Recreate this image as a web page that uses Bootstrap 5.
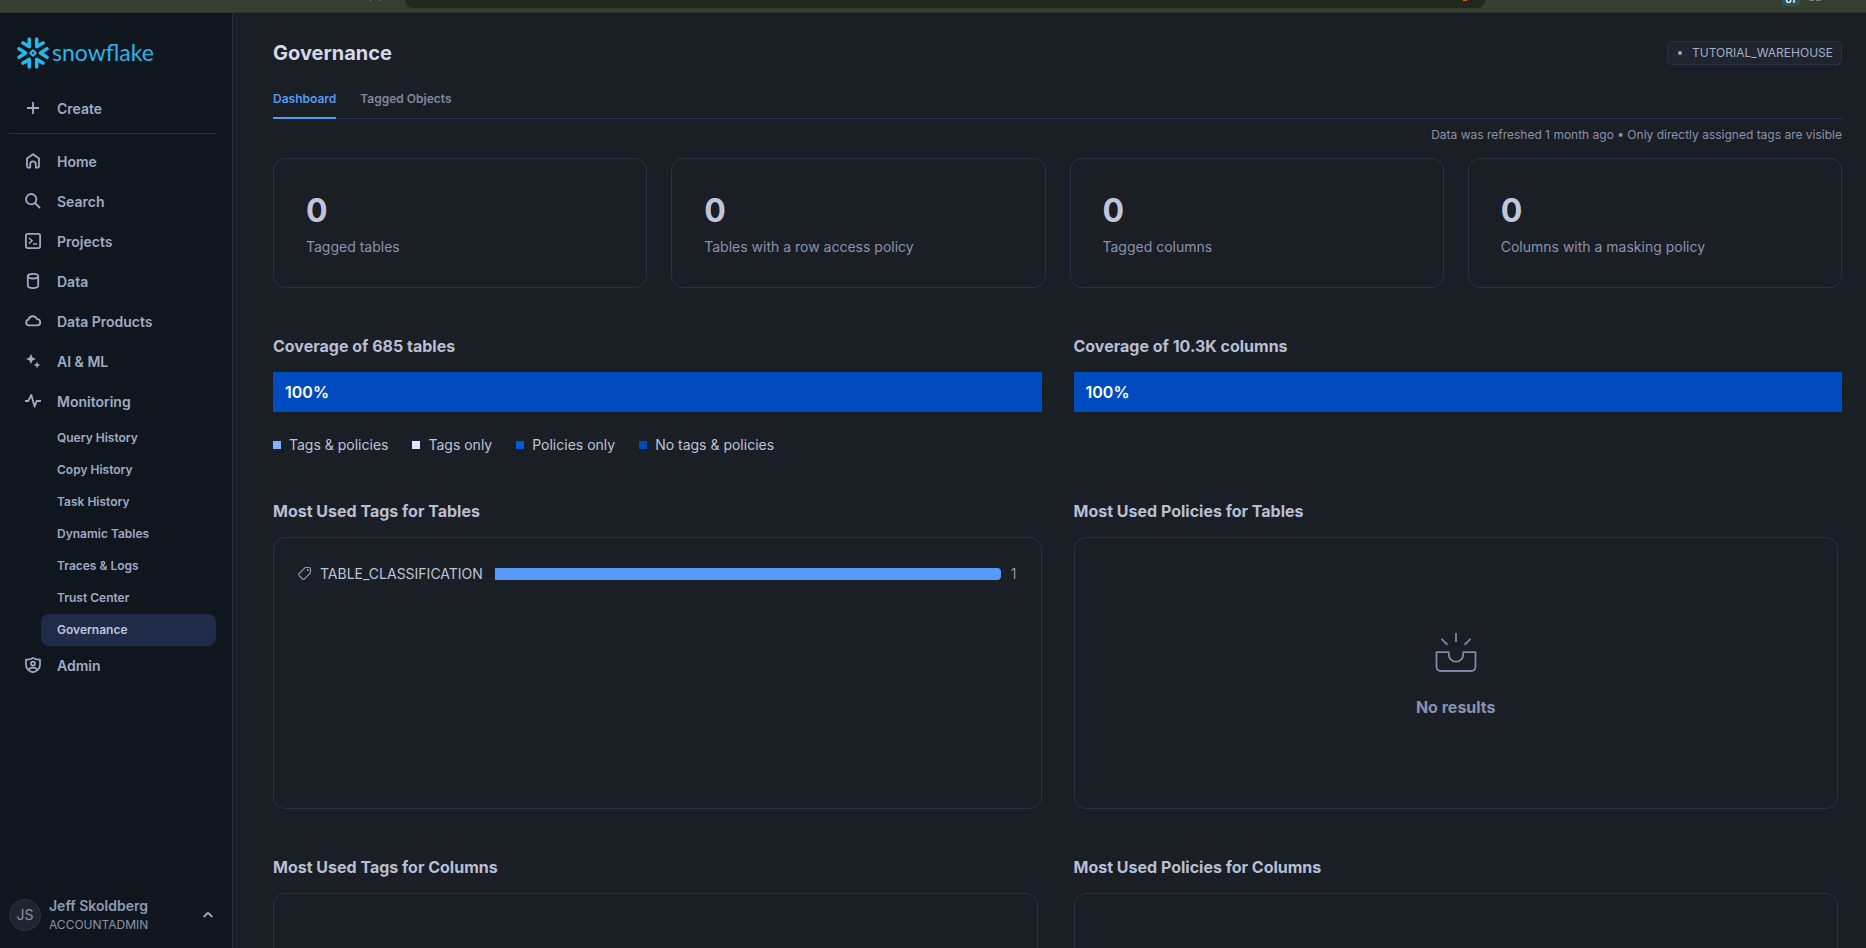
<!DOCTYPE html>
<html lang="en">
<head>
<meta charset="utf-8">
<meta name="viewport" content="width=device-width, initial-scale=1">
<title>Governance</title>
<link href="https://cdn.jsdelivr.net/npm/bootstrap@5.3.0/dist/css/bootstrap.min.css" rel="stylesheet">
<style>
  :root { --line: #2b3144; --muted: #8a93ab; --text: #bdc4d9; --nav: #9fabc4; }
  body { font-family: Inter, "Liberation Sans", sans-serif; font-size: 14px; line-height: 20px; background: #1a1e25; color: var(--text); }
  .page-shell { height: 100vh; overflow: hidden; }
  .browser-strip { height: 13px; background: #353f2f; border-bottom: 1px solid #2e3432; display: grid; grid-template-columns: 405fr 1080fr 381fr; overflow: hidden; }
  .address-pill { height: 8px; background: #1f281a; border-radius: 0 0 8px 8px; }
  .address-mark { width: 4px; height: 1px; background: #e8500c; margin-right: 18px; }
  .strip-dots { margin-right: 17px; }
  .strip-dots i, .strip-tools i { width: 1px; height: 1px; background: #78806f; }
  .strip-dots i { margin-right: 8px; }
  .strip-tools { padding-right: 45px; }
  .strip-tools i { width: 5px; margin-left: 2px; }
  .strip-badge { width: 18px; height: 6px; border-radius: 0 0 4px 4px; background: #2a5364; color: #fff; font-size: 8px; font-weight: 700; line-height: 0; margin-right: 7px; text-align: center; overflow: hidden; }

  .side { width: 233px; background: #10161d; border-right: 1px solid #2b2f45; padding: 24px 16px 14px 9px; }
  .brand { color: #29b5e8; font-family: Lato, sans-serif; font-size: 23px; line-height: 32px; padding-left: 8px; gap: 3px; margin-bottom: 20px; }
  .brand:hover { color: #29b5e8; }
  .brand span { margin-bottom: 2px; line-height: 30px; }
  .side .nav-link { color: var(--nav); font-weight: 600; padding: 0 0 0 16px; height: 40px; gap: 16px; display: flex; align-items: center; }
  .side .nav-link svg { margin-bottom: 2px; }
  .side .create-link { margin-bottom: 4px; }
  .side-rule { border-top: 1px solid #2a303e; margin-bottom: 8px; }
  .side .sub-nav .nav-link { font-size: 12px; height: 32px; margin-left: 32px; border-radius: 8px; }
  .side .sub-nav .nav-link.active { background: #1f2b49; color: #bdc4d9; }
  .account { color: var(--nav); background: none; border: 0; padding: 0 3px 0 0; text-align: left; }
  .avatar { width: 32px; height: 32px; border-radius: 50%; background: #1e252f; border: 1px solid #2b3144; color: var(--muted); }
  .account-name { font-weight: 600; line-height: 20px; color: #8f9ab3; }
  .account-role { font-size: 12px; line-height: 18px; color: var(--muted); }

  .content { padding: 24px 24px 0 40px; min-width: 0; }
  .page-title { font-size: 20px; line-height: 32px; font-weight: 700; color: #d5d9e6; }
  .warehouse { font-size: 12px; line-height: 16px; padding: 3px 8px 3px 10px; background: #1e252f; border: 1px solid var(--line); border-radius: 5px; color: #a3adc4; }
  .warehouse::before { content: ""; width: 4px; height: 4px; border-radius: 50%; background: var(--nav); margin-right: 10px; }
  .tab-row { margin-top: 12px; border-bottom: 1px solid #2b3350; gap: 24px; }
  .tab-row .nav-link { padding: 9px 0; font-size: 12px; line-height: 18px; font-weight: 600; color: #7f889f; border-bottom: 2px solid transparent; margin-bottom: -1px; border-radius: 0; }
  .tab-row .nav-link.active { color: #5999f8; border-color: #5999f8; }
  .refresh-note { font-size: 12px; line-height: 16px; color: var(--muted); padding: 8px 0 15px; }
  .outline { border: 1px solid var(--line); border-radius: 12px; }
  .stat { padding: 32px; height: 130px; }
  .stat-value { font-size: 32px; line-height: 40px; font-weight: 700; color: #bfc5da; }
  .stat-label { color: var(--muted); line-height: 20px; margin-top: 6px; }
  .pair { --bs-gutter-x: 32px; }
  .section-title { font-size: 16px; line-height: 24px; font-weight: 700; margin: 0 0 14px; color: #b8bfd4; }
  .coverage { margin-top: 46px; }
  .coverage .progress { height: 40px; border-radius: 0; background: #2b3144; }
  .coverage .progress-bar { background: #004bbd; color: #fff; font-size: 16px; font-weight: 600; text-align: left; padding-left: 12px; }
  .legend { gap: 24px; margin-top: 23px; }
  .legend li::before { content: ""; width: 8px; height: 8px; margin-right: 8px; background: var(--key); }
  .k-both { --key: #82b4fc; } .k-tags { --key: #d6e6ff; } .k-pol { --key: #0757d8; } .k-none { --key: #0049bb; }
  .usage { margin-top: 44px; }
  .usage + .usage { margin-top: 46px; }
  .usage .outline { height: 272px; }
  .inset-end { margin-right: 4px; }
  .tag-list { padding: 26px 24px 26px 23px; }
  .tag-bar { height: 12px; background: #5999f8; border-radius: 0 4px 4px 0; margin: 0 10px 0 12px; }
  .tag-count { color: var(--muted); }
  .empty { color: #8992ad; font-size: 16px; line-height: 24px; font-weight: 700; padding-top: 4px; }
  .empty svg { margin-bottom: 22px; }
</style>
</head>
<body>
<div class="page-shell d-flex flex-column">
  <div class="browser-strip flex-shrink-0">
    <div class="strip-dots d-flex justify-content-end"><i></i><i></i></div>
    <div class="address-pill d-flex justify-content-end"><span class="address-mark"></span></div>
    <div class="strip-tools d-flex justify-content-end"><span class="strip-badge">OT</span><i></i><i></i></div>
  </div>
  <div class="d-flex flex-grow-1 overflow-hidden">
    <aside class="side d-flex flex-column flex-shrink-0">
      <a class="brand d-flex align-items-center text-decoration-none" href="#">
        <svg width="32" height="32" viewBox="0 0 32 32" fill="none" stroke="#29b5e8" stroke-width="3.6" stroke-linecap="round" stroke-linejoin="round" aria-hidden="true">
          <path d="M12.3 2v7.6L6 6M19.7 2v7.6L26 6M12.3 30v-7.6L6 26M19.7 30v-7.6L26 26M2 11.8L8.6 16 2 20.2M30 11.8L23.4 16 30 20.2"/>
          <path stroke-width="2" d="M16 13.2l2.800 2.800-2.800 2.800-2.800-2.800z"/>
        </svg>
        <span>snowflake</span>
      </a>
      <a class="nav-link create-link" href="#"><svg width="16" height="16" viewBox="0 0 16 16" fill="none" stroke="currentColor" stroke-width="1.8" aria-hidden="true"><path d="M8 2v12M2 8h12"/></svg>Create</a>
      <div class="side-rule"></div>
      <nav class="nav flex-column">
        <a class="nav-link" href="#"><svg width="16" height="16" viewBox="0 0 16 16" fill="none" stroke="currentColor" stroke-width="1.8" stroke-linejoin="round" aria-hidden="true"><path d="M2 5.600L8 1.200l6 4.400V13q0 1.600-1.300 1.600h-1.900v-3.400a2.800 2.800 0 0 0-5.600 0v3.400H3.300Q2 14.600 2 13z"/></svg>Home</a>
        <a class="nav-link" href="#"><svg width="16" height="16" viewBox="0 0 16 16" fill="none" stroke="currentColor" stroke-width="1.8" aria-hidden="true"><circle cx="6.2" cy="6.2" r="5.200"/><path d="M10 10l5 5"/></svg>Search</a>
        <a class="nav-link" href="#"><svg width="16" height="16" viewBox="0 0 16 16" fill="none" stroke="currentColor" stroke-width="1.8" aria-hidden="true"><rect x=".9" y=".9" width="14.2" height="14.2" rx="1.8"/><path stroke-width="1.5" d="M4 5l3 2.800L4 10.600M8 10.900h4"/></svg>Projects</a>
        <a class="nav-link" href="#"><svg width="16" height="16" viewBox="0 0 16 16" fill="none" stroke="currentColor" stroke-width="1.8" aria-hidden="true"><path d="M2.800 3.200v9.400q0 2.500 5.200 2.500t5.200-2.500V3.200"/><ellipse cx="8" cy="3.2" rx="5.2" ry="2.3"/></svg>Data</a>
        <a class="nav-link" href="#"><svg width="16" height="16" viewBox="0 0 16 16" fill="none" stroke="currentColor" stroke-width="1.8" stroke-linejoin="round" aria-hidden="true"><path d="M3.800 12.400a2.900 2.900 0 0 1-.4-5.700A4.500 4.500 0 0 1 12 6.200a3.100 3.100 0 0 1 .2 6.200z"/></svg>Data Products</a>
        <a class="nav-link" href="#"><svg width="16" height="16" viewBox="0 0 16 16" fill="currentColor" aria-hidden="true"><path d="M6 1l1.600 3.400L11 6 7.600 7.600 6 11 4.400 7.600 1 6l3.400-1.600zM12 8.600l1 2.400 2.400 1-2.400 1-1 2.400-1-2.400-2.400-1 2.400-1z"/></svg>AI &amp; ML</a>
        <a class="nav-link" href="#"><svg width="16" height="16" viewBox="0 0 16 16" fill="none" stroke="currentColor" stroke-width="1.8" stroke-linejoin="round" aria-hidden="true"><path d="M0 8h3.200L6.300 2l3.300 11.600L11.700 8H16"/></svg>Monitoring</a>
      </nav>
      <nav class="nav flex-column sub-nav">
        <a class="nav-link" href="#">Query History</a>
        <a class="nav-link" href="#">Copy History</a>
        <a class="nav-link" href="#">Task History</a>
        <a class="nav-link" href="#">Dynamic Tables</a>
        <a class="nav-link" href="#">Traces &amp; Logs</a>
        <a class="nav-link" href="#">Trust Center</a>
        <a class="nav-link active" aria-current="page" href="#">Governance</a>
      </nav>
      <a class="nav-link" href="#"><svg width="16" height="16" viewBox="0 0 16 16" fill="none" stroke="currentColor" stroke-width="1.7" stroke-linejoin="round" aria-hidden="true"><path d="M8 .9q3 2 7 1.800v4.600q0 5-4.300 7-2.700 1.500-5.400 0Q1 12.300 1 7.300V2.700Q5 2.900 8 .9z"/><circle cx="8" cy="6.6" r="2"/><path d="M3.800 12.800q.7-2.200 4.200-2.200t4.200 2.200"/></svg>Admin</a>
      <button type="button" class="account d-flex align-items-center mt-auto w-100">
        <span class="avatar d-flex align-items-center justify-content-center me-2">JS</span>
        <span class="d-flex flex-column"><span class="account-name">Jeff Skoldberg</span><span class="account-role">ACCOUNTADMIN</span></span>
        <svg class="ms-auto" width="10" height="8" viewBox="0 0 10 8" fill="none" stroke="currentColor" stroke-width="1.8" aria-hidden="true"><path d="M.7 6L5 1.800 9.300 6"/></svg>
      </button>
    </aside>

    <main class="content flex-grow-1 overflow-hidden">
      <header class="d-flex justify-content-between align-items-center">
        <h1 class="page-title m-0">Governance</h1>
        <button type="button" class="warehouse d-flex align-items-center">TUTORIAL_WAREHOUSE</button>
      </header>
      <nav class="nav tab-row">
        <a class="nav-link active" aria-current="page" href="#">Dashboard</a>
        <a class="nav-link" href="#">Tagged Objects</a>
      </nav>
      <div class="refresh-note text-end">Data was refreshed 1 month ago • Only directly assigned tags are visible</div>

      <div class="row gx-4">
        <div class="col-3"><div class="outline stat"><div class="stat-value">0</div><div class="stat-label">Tagged tables</div></div></div>
        <div class="col-3"><div class="outline stat"><div class="stat-value">0</div><div class="stat-label">Tables with a row access policy</div></div></div>
        <div class="col-3"><div class="outline stat"><div class="stat-value">0</div><div class="stat-label">Tagged columns</div></div></div>
        <div class="col-3"><div class="outline stat"><div class="stat-value">0</div><div class="stat-label">Columns with a masking policy</div></div></div>
      </div>

      <div class="row pair coverage">
        <section class="col-6">
          <h2 class="section-title">Coverage of 685 tables</h2>
          <div class="progress" role="progressbar" aria-valuenow="100" aria-valuemin="0" aria-valuemax="100"><div class="progress-bar" style="width:100%">100%</div></div>
          <ul class="legend list-unstyled d-flex mb-0">
            <li class="k-both d-flex align-items-center">Tags &amp; policies</li>
            <li class="k-tags d-flex align-items-center">Tags only</li>
            <li class="k-pol d-flex align-items-center">Policies only</li>
            <li class="k-none d-flex align-items-center">No tags &amp; policies</li>
          </ul>
        </section>
        <section class="col-6">
          <h2 class="section-title">Coverage of 10.3K columns</h2>
          <div class="progress" role="progressbar" aria-valuenow="100" aria-valuemin="0" aria-valuemax="100"><div class="progress-bar" style="width:100%">100%</div></div>
        </section>
      </div>

      <div class="row pair usage">
        <section class="col-6">
          <h2 class="section-title">Most Used Tags for Tables</h2>
          <div class="outline tag-list">
            <div class="d-flex align-items-center">
              <svg class="flex-shrink-0 me-2" width="15" height="15" viewBox="0 0 15 15" fill="none" stroke="#8a93ab" stroke-width="1.2" stroke-linejoin="round" aria-hidden="true"><path d="M7.600 1.100q.6-.6 1.500-.6h2.800q1.600 0 1.600 1.600v2.800q0 .9-.6 1.500l-5.300 5.400q-1.100 1-2.200 0L2.200 8.700q-1-1.100 0-2.200z"/><circle cx="10.9" cy="3.1" r=".5"/></svg>
              <span>TABLE_CLASSIFICATION</span>
              <div class="tag-bar flex-grow-1"></div>
              <span class="tag-count">1</span>
            </div>
          </div>
        </section>
        <section class="col-6">
          <h2 class="section-title">Most Used Policies for Tables</h2>
          <div class="outline inset-end empty d-flex flex-column align-items-center justify-content-center">
            <svg width="42" height="42" viewBox="0 0 42 42" fill="none" stroke="#7c8ba8" stroke-width="1.8" aria-hidden="true"><path d="M21 2v9M6.500 7.800l6 6M35.500 7.800l-6 6"/><path stroke-linejoin="round" d="M1.500 21.200h12.300v2.300a7.200 7.200 0 0 0 14.400 0v-2.300h12.300v14q0 4.800-4.800 4.800H6.300q-4.800 0-4.800-4.800z"/></svg>
            <span>No results</span>
          </div>
        </section>
      </div>

      <div class="row pair usage">
        <section class="col-6">
          <h2 class="section-title">Most Used Tags for Columns</h2>
          <div class="outline inset-end"></div>
        </section>
        <section class="col-6">
          <h2 class="section-title">Most Used Policies for Columns</h2>
          <div class="outline inset-end"></div>
        </section>
      </div>
    </main>
  </div>
</div>
<script src="https://cdn.jsdelivr.net/npm/bootstrap@5.3.0/dist/js/bootstrap.bundle.min.js"></script>
</body>
</html>
